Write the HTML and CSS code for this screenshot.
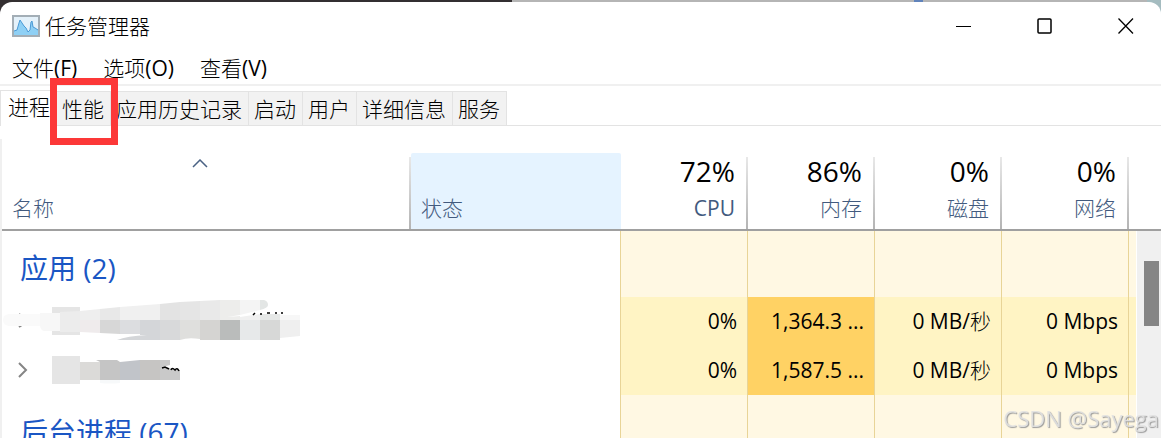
FILE: index.html
```html
<!DOCTYPE html>
<html lang="zh-CN">
<head>
<meta charset="UTF-8">
<title>任务管理器</title>
<link rel="stylesheet" href="styles.css">
</head>

<body>
<div class="window">
  <header class="titlebar">
    <svg class="logo" width="28" height="22" viewBox="0 0 28 22">
      <rect x="1" y="1" width="26" height="20" fill="#e4f1fa" stroke="#a3aeb6" stroke-width="2"/>
      <path d="M2 16 L5 15 L7 8 L8 5 L10 8 L12 11 L14 13 L16 17 L18 15 L19 7 L20 6 L21 12 L23 13 L26 15 V20 H2 Z" fill="#8fd0f5"/>
      <path d="M2 16 L5 15 L7 8 L8 5 L10 8 L12 11 L14 13 L16 17 L18 15 L19 7 L20 6 L21 12 L23 13 L26 15" fill="none" stroke="#4a9ad6"/>
    </svg>
    <h1>任务管理器</h1>
    <div class="controls">
      <button type="button" aria-label="最小化"><svg width="16" height="16" viewBox="0 0 16 16"><path d="M0 8.5H15"/></svg></button>
      <button type="button" aria-label="最大化"><svg width="16" height="16" viewBox="0 0 16 16"><rect x="1" y="1" width="13" height="14" rx="1" stroke-width="1.5"/></svg></button>
      <button type="button" aria-label="关闭"><svg width="16" height="16" viewBox="0 0 16 16"><path d="M.5 .5L15 15.5M15 .5L.5 15.5" stroke-width="1.3"/></svg></button>
    </div>
  </header>

  <nav class="menu">
    <button type="button">文件(F)</button>
    <button type="button">选项(O)</button>
    <button type="button">查看(V)</button>
  </nav>

  <div class="tabs" role="tablist">
    <button type="button" role="tab" class="active" aria-selected="true">进程</button>
    <button type="button" role="tab" class="marked">性能</button>
    <button type="button" role="tab">应用历史记录</button>
    <button type="button" role="tab">启动</button>
    <button type="button" role="tab">用户</button>
    <button type="button" role="tab">详细信息</button>
    <button type="button" role="tab">服务</button>
  </div>

  <main class="panel">
    <table>
      <colgroup>
        <col>
        <col class="col-status">
        <col class="col-num">
        <col class="col-num">
        <col class="col-num">
        <col class="col-num">
        <col class="col-rest">
        <col class="col-scroll">
      </colgroup>
      <thead>
        <tr>
          <th class="name" aria-sort="ascending">
            <svg class="sort" width="16" height="9" viewBox="0 0 16 9"><path d="M1 8L8 1L15 8"/></svg>
            名称
          </th>
          <th class="status">状态</th>
          <th class="num"><b>72%</b>CPU</th>
          <th class="num"><b>86%</b>内存</th>
          <th class="num"><b>0%</b>磁盘</th>
          <th class="num"><b>0%</b>网络</th>
          <th colspan="2"></th>
        </tr>
      </thead>
      <tbody>
        <tr class="group">
          <td class="label" colspan="2">应用 (2)</td>
          <td class="heat"></td>
          <td class="heat"></td>
          <td class="heat"></td>
          <td class="heat"></td>
          <td class="heat rest"></td>
          <td class="scroll" rowspan="4"><div class="thumb"></div></td>
        </tr>
        <tr class="process">
          <td class="label" colspan="2">
            <svg width="300" height="49" viewBox="0 0 300 49">
              <path class="arrow" d="M17 17L20 19M17 30L20 28"/>
              <rect x="50" y="10" width="28" height="28" fill="#e5e5e5"/>
              <path d="M7 17H38V29H7Q1 28 1 23Q1 18 7 17Z" fill="#fafafa"/>
              <path d="M38 16H58V34H42Q38 33 38 28Z" fill="#f7f7f7"/>
              <path d="M58 15L78 14V35H58Z" fill="#ececec"/>
              <path d="M78 14L98 12V23H78Z" fill="#eeeeee"/>
              <path d="M78 23H98V36L78 35Z" fill="#efebec"/>
              <path d="M98 12L118 10V23H98Z" fill="#e8e8e8"/>
              <path d="M118 10L158 7V23H118Z" fill="#f0f0f0"/>
              <path d="M158 7L178 5V23H158Z" fill="#e3e3e3"/>
              <path d="M178 5L198 4V23H178Z" fill="#e5e5e5"/>
              <path d="M198 4L218 3V23H198Z" fill="#e9e9e9"/>
              <path d="M218 3H238V18L225 20L238 19V23H218Z" fill="#ededeb"/>
              <path d="M238 3H258V13L238 18Z" fill="#f4f4f4"/>
              <path d="M258 3H262Q266 4 266 8Q266 11 258 13Z" fill="#e3e6e5"/>
              <path d="M238 20L258 17V23H238Z" fill="#f0f0f0"/>
              <path d="M258 17H278V23H258Z" fill="#e6e8e7"/>
              <path d="M278 18H298V23H278Z" fill="#f7f7f7"/>
              <path d="M98 23H118V37L98 36Z" fill="#d7d7d7"/>
              <path d="M118 23H138V37H118Z" fill="#dcdde0"/>
              <path d="M138 23H158V43H115Q125 39 145 38H138Z" fill="#d4d6d9"/>
              <path d="M158 23H178V43H158Z" fill="#d8d9da"/>
              <path d="M178 23H198V42Q186 40 178 43Z" fill="#dfdfdd"/>
              <path d="M198 23H218V43H198Z" fill="#d5d4d2"/>
              <path d="M218 23H238V43H218Z" fill="#babcbb"/>
              <path d="M238 23H258V43H238Z" fill="#e7e9ea"/>
              <path d="M258 23H278V43H258Z" fill="#d7d8d7"/>
              <path d="M278 23H298V39L278 41Z" fill="#efefef"/>
              <path class="ink" d="M251 18L253 16M258 17H260M265 16H268M273 16H275M279 16H281"/>
            </svg>
          </td>
          <td class="heat warm">0%</td>
          <td class="heat hot">1,364.3 ...</td>
          <td class="heat warm">0 MB/秒</td>
          <td class="heat warm">0 Mbps</td>
          <td class="heat warm rest"></td>
        </tr>
        <tr class="process">
          <td class="label" colspan="2">
            <svg width="300" height="49" viewBox="0 0 300 49">
              <path class="arrow" d="M17 17L24 24L17 31"/>
              <rect x="50" y="10" width="28" height="28" fill="#e5e5e5"/>
              <rect x="78" y="16" width="20" height="18" fill="#dbdad8"/>
              <path d="M94 14H115L118 16V34H98V16Z" fill="#c5c5c5"/>
              <path d="M118 16L138 14V34H118Z" fill="#c1c4c9"/>
              <path d="M98 34H118V37Q108 38 98 37Z" fill="#f7f9fa"/>
              <path d="M138 14H158V34H138Z" fill="#c6c5c3"/>
              <path d="M158 14H168V19L160 21L178 24V34H158Z" fill="#c9c9c9"/>
              <path class="ink" d="M160 22L163 21L167 23M169 24Q170 21 173 24Q175 21 177 25"/>
            </svg>
          </td>
          <td class="heat warm">0%</td>
          <td class="heat hot">1,587.5 ...</td>
          <td class="heat warm">0 MB/秒</td>
          <td class="heat warm">0 Mbps</td>
          <td class="heat warm rest"></td>
        </tr>
        <tr class="group">
          <td class="label" colspan="2">后台进程 (67)</td>
          <td class="heat"></td>
          <td class="heat"></td>
          <td class="heat"></td>
          <td class="heat"></td>
          <td class="heat rest"></td>
        </tr>
      </tbody>
    </table>
  </main>
</div>
<div class="watermark">CSDN @Sayega</div>
</body>
</html>
```
FILE: styles.css
```css
*, *::after {box-sizing: border-box;}
html {height: 100%;overflow: hidden;}
body {
  margin: 0;
  padding-top: 2px;
  height: 100%;
  overflow: hidden;
  font: 400 21px/28px "Open Sans", "Noto Sans CJK SC Light", "Noto Sans CJK SC", sans-serif;
  color: #000;
  background: linear-gradient(90deg, #332f31 512px, #b5b5b5 512px, #b5b5b5 914px, #6083bb 914px, #6083bb 923px, #b5b5b5 923px, #b5b5b5 1147px, #a5bcc0 1147px);
}
button {
  margin: 0;
  padding: 0;
  border: 0;
  background: none;
  font: inherit;
  color: inherit;
}
svg {display: block;}

.window {
  min-height: 100%;
  background: #fff;
  border-radius: 12px 12px 0 0;
}

/* barre de titre */
.titlebar {display: flex;align-items: center;height: 48px;padding-left: 12px;}
.titlebar h1 {margin: 0 0 0 5px;font-size: 21px;font-weight: 400;}
.controls {display: flex;margin-left: auto;}
.controls button {
  display: flex;
  align-items: center;
  justify-content: center;
  width: 81px;
  height: 48px;
}
.controls button:last-child {width: 71px;margin-left: 5px;}
.controls svg {fill: none;stroke: #000;}

/* menu */
.menu {
  display: flex;
  gap: 26px;
  height: 36px;
  padding: 2px 12px 0;
  border-bottom: 2px solid #f0f0f0;
}

/* onglets */
.tabs {
  display: flex;
  align-items: flex-end;
  height: 40px;
  border-bottom: 1px solid #e3e3e3;
}
.tabs button {
  height: 34px;
  padding: 0 6px 0 5px;
  background: #f2f2f2;
  border-top: 1px solid #e3e3e3;
  border-right: 1px solid #e3e3e3;
}
.tabs .active {
  height: 36px;
  margin-bottom: -1px;
  padding: 0 6px 4px 7px;
  background: #fff;
  border-left: 1px solid #e3e3e3;
}
.tabs .marked {position: relative;}
.tabs .marked::after {
  content: "";
  position: absolute;
  top: -14px;
  left: -7px;
  width: 68px;
  height: 67px;
  border: 7px solid #fc3838;
}

/* le tableau */
.panel {margin-top: 13px;padding-top: 14px;border-left: 2px solid #f0f0f0;}
table {width: 100%;table-layout: fixed;border-collapse: separate;border-spacing: 0;}
.col-status {width: 210px;}
.col-num {width: 127px;}
.col-rest {width: 8px;}
.col-scroll {width: 24px;}
th, td {padding: 0;text-align: left;font-weight: 400;}
th {
  height: 78px;
  padding: 0 10px 7px;
  vertical-align: bottom;
  border-bottom: 2px solid #a0a0a0;
  color: #425a7e;
}
th.name, th.num {
  background: linear-gradient(#e8e8e8, #b4b4b4) right bottom / 2px 72px no-repeat;
}
th.name {padding-right: 24px;}
th.status {background: #e5f3ff;border-radius: 2px 2px 0 0;}
th.num {padding-right: 13px;text-align: right;}
th b {display: block;margin-bottom: 5px;font-size: 28px;line-height: 36px;font-weight: 400;color: #000;}
.sort {margin: 0 auto 26px;fill: none;stroke: #4a6284;stroke-width: 1.5;}

.group td {
  height: 66px;
  padding: 8px 0 0 18px;
  font-family: "Open Sans", "Noto Sans CJK SC", sans-serif;
  font-size: 28px;
  color: #1a56c4;
}
.process td {height: 49px;}
tbody .label {border-right: 1px solid #e8d497;}
tbody .heat {
  padding: 0 10px 2px 0;
  background: #fff8e3;
  border-right: 1px solid #e8d497;
  text-align: right;
}
tbody .warm {background: #fff4c4;}
tbody .hot {background: #ffd264;}
tbody .rest {padding: 0;border-right-color: #fff;}
.arrow {fill: none;stroke: #858585;stroke-width: 2;}
.ink {fill: none;stroke: #000;stroke-width: 1.5;}

/* ascenseur */
tbody .scroll {padding: 30px 2px 0 7px;vertical-align: top;background: #f0f0f0;}
.thumb {height: 65px;background: #858585;}

.watermark {
  position: fixed;
  right: 2px;
  bottom: 6px;
  font: 22px/28px "Open Sans", sans-serif;
  color: rgba(225, 225, 225, .9);
  text-shadow: 1px 1px 1px #999;
}
```
